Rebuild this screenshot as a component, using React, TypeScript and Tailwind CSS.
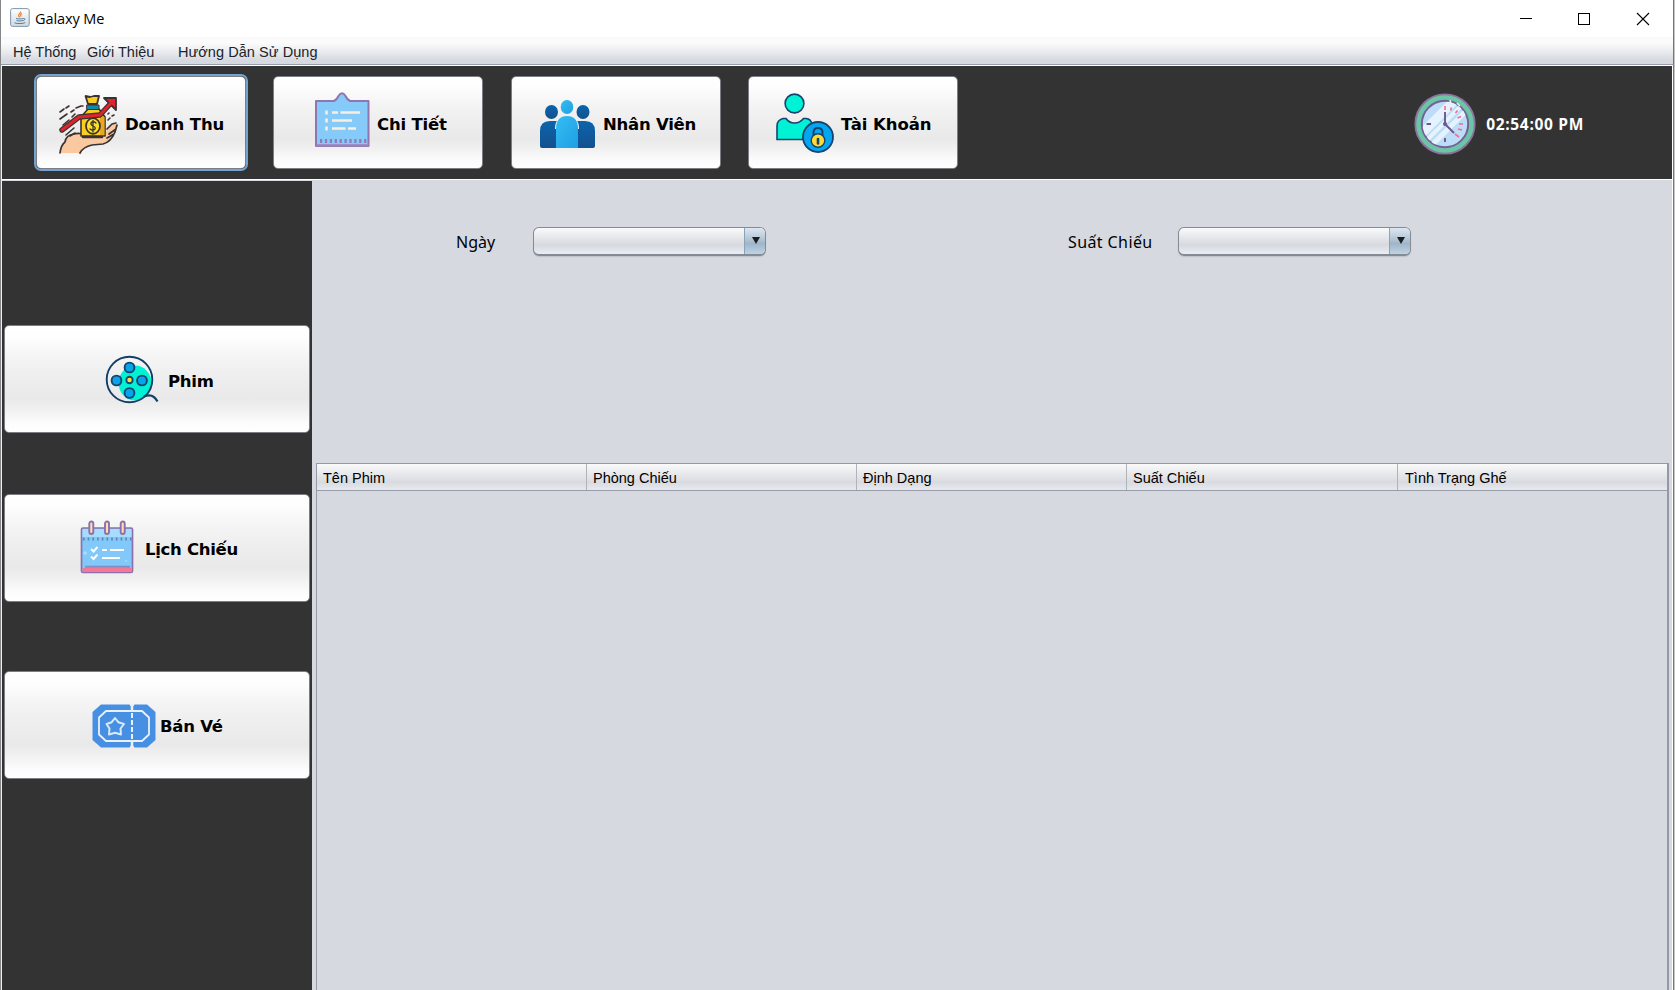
import type { ReactNode } from "react";

const DASH = "#3b3230";

function JavaIcon() {
  return (
    <svg width="20" height="20" viewBox="0 0 20 20" className="mb-px shrink-0">
      <defs>
        <linearGradient id="jbg" x1="0" y1="0" x2="0" y2="1">
          <stop offset="0" stopColor="#ffffff" />
          <stop offset="1" stopColor="#cfd8e1" />
        </linearGradient>
      </defs>
      <rect x="0.6" y="0.6" width="18.6" height="17.8" rx="2" fill="url(#jbg)" stroke="#7f97ad" />
      <path d="M10.500 3.500c1.200 1.800-3 2.600-1.800 4.400.5.600.8 1 .8 1.500M12 5.500c-1.600 1-1.800 1.800-.8 3" fill="none" stroke="#e8873a" strokeWidth="1.300" />
      <path d="M6 10.500c2 .6 5.500.6 7.500 0M6.500 12.500c2 .6 4.500.6 6.500 0M13.500 10.500c2.200-.4 1.800 1.600-.3 2M4.500 14.800c3 1.100 8 1 10.800-.2" fill="none" stroke="#5b7c99" strokeWidth="1" />
    </svg>
  );
}

function RevenueIcon() {
  return (
    <svg width="60" height="60" viewBox="0 0 60 60" className="mt-[4px] shrink-0" strokeLinecap="round" strokeLinejoin="round">
      <path d="M2 57Q3 50 7 47Q8 40 16 39Q23 37 28 41L45 41L52 31Q57 25 59 30L57 37Q53 47 45 49L34 50Q25 53 22 58L2 58Z" fill="#fbc9a0" />
      <path d="M2 58Q3 50 7 47Q8 40 16 39Q23 37 28 41M22 58Q25 52 34 50L45 49Q53 47 57 37L59 30M49 34L54 29L58 28M51 39L58 34M49 43L56 39" fill="none" stroke={DASH} strokeWidth="1.700" />
      <path d="M27.500 1L32 2L36 1L41 1L39 9H30Z" fill="#f5cf24" stroke={DASH} strokeWidth="1.800" />
      <path d="M30 14H41L47 22V41H23V22Z" fill="#f8cf20" stroke={DASH} strokeWidth="1.600" />
      <path d="M42 22H46.500V40H42Z" fill="#e7a91d" />
      <rect x="29" y="10" width="12" height="4.500" fill="#0b8aae" stroke={DASH} strokeWidth="1" />
      <ellipse cx="35" cy="31" rx="7" ry="7.800" fill="#ffe026" stroke={DASH} strokeWidth="1.800" />
      <path d="M38 28Q35 25.500 33 28Q32.500 30 35 31Q38 32 37 34Q35 36.500 32 34M35 25.500V37" fill="none" stroke={DASH} strokeWidth="1.300" />
      <path d="M25 42H44" stroke={DASH} strokeWidth="2.500" />
      <path d="M4 35L21 22L42 20L53 8" fill="none" stroke={DASH} strokeWidth="5.400" />
      <path d="M46 3H58V15Z" fill="#e3232f" stroke={DASH} strokeWidth="1.800" />
      <path d="M4 35L21 22L42 20L54 7" fill="none" stroke="#e0242f" strokeWidth="3" />
      <path d="M2 17L6 14M8 13L11 11M2 24L9 19M13 17L16 15M18 13L23 11H25M5 30L11 25M14 22L17 19M8 40L16 33M12 41L17 38M50 25L52 23M54 21L56 20M50 19L51 18" fill="none" stroke={DASH} strokeWidth="1.600" />
    </svg>
  );
}

function DetailIcon() {
  return (
    <svg width="56" height="56" viewBox="0 0 56 56" className="mb-[5px] shrink-0">
      <path d="M2 9H20Q23 7.500 24.500 4Q28 -1.500 31.500 4Q33 7.500 36 9H54.500V54H2Z" fill="#86cafa" stroke="#9175ae" strokeWidth="2" strokeLinejoin="round" />
      <path d="M2 53.500H54.500" stroke="#9c80b6" strokeWidth="2.600" />
      <g stroke="#f8efe0" strokeWidth="2.300">
        <path d="M18 20.500H24M26.500 20.500H46M18 28.500H38M18 36.500H31.500M34 36.500H42" />
        <path d="M12.500 18.500V22.500M12.500 26.500V30.500M12.500 34.500V38.500" strokeWidth="2.500" />
      </g>
      <path d="M6 49H53" stroke="#8f7bb5" strokeWidth="4" strokeDasharray="2.200 2.700" />
    </svg>
  );
}

function StaffIcon() {
  return (
    <svg width="56" height="50" viewBox="0 0 56 50" className="mt-[2px] shrink-0">
      <defs>
        <linearGradient id="dk" x1="0" y1="0" x2="0" y2="1">
          <stop offset="0" stopColor="#0b64ad" />
          <stop offset="1" stopColor="#14508d" />
        </linearGradient>
        <linearGradient id="lt" x1="0" y1="0" x2="1" y2="1">
          <stop offset="0" stopColor="#34bdf3" />
          <stop offset="1" stopColor="#1f9fe4" />
        </linearGradient>
      </defs>
      <ellipse cx="11.500" cy="13" rx="6.500" ry="7" fill="url(#dk)" />
      <ellipse cx="43" cy="13" rx="6.500" ry="7" fill="url(#dk)" />
      <path d="M0 47V32Q0 22 10 22H20V49H2Q0 49 0 47Z" fill="url(#dk)" />
      <path d="M55 47V32Q55 22 45 22H36V49H53Q55 49 55 47Z" fill="url(#dk)" />
      <path d="M15 49V29Q15.500 17 27 17Q38.500 17 39 29V49Z" fill="#eef4f8" />
      <path d="M16 49V29Q16.500 17 27 17Q37.500 17 38 29V49Z" fill="url(#lt)" />
      <path d="M15 49V30H16V49ZM38 49V30H39V49Z" fill="#0e58a0" />
      <ellipse cx="27" cy="8" rx="6.300" ry="7" fill="url(#lt)" />
    </svg>
  );
}

function AccountIcon() {
  return (
    <svg width="60" height="62" viewBox="0 0 60 62" className="mt-px shrink-0">
      <circle cx="19.500" cy="11.500" r="9.400" fill="#00f2d4" stroke="#17436e" strokeWidth="1.600" />
      <path d="M2 47.500V34Q2 28 8 26.500H11Q14 31 19.500 31Q25 31 28.500 26.500H31Q36 27 37 32L40 47.500Z" fill="#00f2d4" stroke="#17436e" strokeWidth="1.600" />
      <circle cx="43" cy="45" r="15" fill="#04a6f0" stroke="#17436e" strokeWidth="1.800" />
      <path d="M38.500 44V40.500Q38.500 36 43 36Q47.500 36 47.500 40.500V44" fill="none" stroke="#17436e" strokeWidth="2" />
      <circle cx="43" cy="48.500" r="6.800" fill="#ffdb35" stroke="#17436e" strokeWidth="1.400" />
      <path d="M43 47V51.500" stroke="#17436e" strokeWidth="2.600" strokeLinecap="round" />
    </svg>
  );
}

function ReelIcon() {
  return (
    <svg width="54" height="50" viewBox="0 0 54 50" className="mt-px shrink-0">
      <ellipse cx="30" cy="28" rx="16.500" ry="17.500" fill="#00f2d4" />
      <circle cx="24.500" cy="24.500" r="22.800" fill="none" stroke="#123f68" strokeWidth="1.900" />
      <g fill="#06a4ea" stroke="#17436e" strokeWidth="1.900">
        <circle cx="24.500" cy="12.500" r="4.900" />
        <circle cx="11.500" cy="25.500" r="4.900" />
        <circle cx="37" cy="25.500" r="4.900" />
        <circle cx="24.500" cy="38" r="4.900" />
      </g>
      <circle cx="24.500" cy="25" r="3.200" fill="#ffdb35" stroke="#17436e" strokeWidth="1.900" />
      <path d="M39 41.500Q48 37.500 52.500 46.500" fill="none" stroke="#123f68" strokeWidth="2.200" />
    </svg>
  );
}

function CalendarIcon() {
  return (
    <svg width="54" height="54" viewBox="0 0 54 54" className="mb-[2px] shrink-0">
      <rect x="1.500" y="8" width="51" height="44.500" rx="1.500" fill="#82c8f8" stroke="#8d70ab" strokeWidth="1.700" />
      <rect x="2.500" y="9" width="49" height="8" fill="#a6ddfc" />
      <path d="M3 19H52" stroke="#5f86bb" strokeWidth="2.800" strokeDasharray="1.600 3.100" />
      <rect x="2.500" y="48" width="49" height="4" fill="#f47796" />
      <path d="M5 46.800H50" stroke="#7c8fc7" strokeWidth="1.900" />
      <g fill="#f8e0b2" stroke="#8d70ab" strokeWidth="1.900">
        <rect x="9.300" y="1.500" width="4" height="12.500" rx="2" />
        <rect x="25" y="1.500" width="4" height="12.500" rx="2" />
        <rect x="40.700" y="1.500" width="4" height="12.500" rx="2" />
      </g>
      <path d="M11 29L13.500 31.500L17.500 27M11 36.500L13.500 39L17.500 34.500M22 30H27M30 30H44M22 38H40" fill="none" stroke="#fff" strokeWidth="2" />
      <path d="M5 31V35M3 33H7M46 40V42" stroke="#b8e5fc" />
    </svg>
  );
}

function TicketIcon() {
  return (
    <svg width="64" height="44" viewBox="0 0 64 44" className="mt-px shrink-0">
      <path d="M9 .5H37.500L40 4L42.500 .5H55L63.500 8V36L55 43.500H42.500L40 40L37.500 43.500H9L.5 36V8Z" fill="#468fe2" />
      <path d="M14 7H50L57 13.500V30.500L50 37H14L7 30.500V13.500Z" fill="none" stroke="#e9f2fb" strokeWidth="1.800" strokeLinejoin="round" />
      <path d="M40 0V7M40 37V44" stroke="#eee" strokeWidth="2.500" />
      <path d="M40 9V36" stroke="#e9f2fb" strokeWidth="2" strokeDasharray="5 2" />
      <path d="M23 14L26.300 18.200L32 20L28.500 24.500L29 30.500L23 28.800L17 30.500L17.500 24.500L14.500 20L19.700 18.200Z" fill="none" stroke="#d9e9fa" strokeWidth="2" strokeLinejoin="round" />
    </svg>
  );
}

function ClockIcon() {
  return (
    <svg width="62" height="62" viewBox="0 0 62 62" className="shrink-0">
      <defs>
        <clipPath id="face"><circle cx="31" cy="31" r="22.500" /></clipPath>
      </defs>
      <circle cx="31" cy="31" r="29.700" fill="#6cc5a5" stroke="#8d73a0" strokeWidth="1.800" />
      <circle cx="31" cy="31" r="23.200" fill="#bddcf8" stroke="#76609a" strokeWidth="2" />
      <g clipPath="url(#face)" stroke="#e5f3fe">
        <path d="M5 43L43 5" strokeWidth="9" />
        <path d="M15 55L58 12" strokeWidth="5" />
        <path d="M10 50L52 8" strokeWidth="4" />
      </g>
      <path d="M31 19V31L40 40M12.500 31H17M31 45V49" fill="none" stroke="#6e568f" strokeWidth="1.900" />
      <path d="M31 13V17M37.500 14.500L36.500 17.500M43.500 17.500L41.500 20M47 23.500L43.500 25M45 31H49M44 36L48 37M41 41L45 44" stroke="#ed6f91" strokeWidth="1.600" />
      <path d="M36 7L37 11M43 10L46 13" stroke="#e3f2fc" strokeWidth="1.600" />
      <circle cx="31" cy="31" r="2" fill="#6e568f" />
    </svg>
  );
}

function NimbusButton({ children, className, focused }: { children: ReactNode; className: string; focused?: boolean }) {
  return (
    <button
      className={
        "flex shrink-0 items-center rounded-[5px] border border-[#7c7e83] bg-[linear-gradient(180deg,#ffffff_0%,#fdfdfd_12%,#f4f4f4_30%,#eeeeee_48%,#e9e9e9_68%,#f0f0f0_78%,#fcfcfc_92%,#ffffff_100%)] font-['DejaVu_Sans','Liberation_Sans',sans-serif] text-[16.5px] leading-none font-bold tracking-[-0.1px] whitespace-nowrap text-black " +
        (focused ? "shadow-[0_0_0_2px_#73a4d1] " : "") +
        className
      }
    >
      {children}
    </button>
  );
}

function Combo() {
  return (
    <div className="mt-px flex h-[29px] w-[233px] shrink-0 overflow-hidden rounded-[6px] border border-b-2 border-[#858b95] bg-[linear-gradient(180deg,#fafafb_0%,#e6e8eb_35%,#d6d9de_65%,#eaedf4_100%)] shadow-[0_1px_1px_#bfc3ca]">
      <div className="flex-1" />
      <div className="flex w-[21px] items-center justify-center border-l border-[#8ba3b8] bg-[linear-gradient(180deg,#dce7f0_0%,#b6c8d8_40%,#a0b5c8_60%,#bdd3e6_100%)] pb-px pl-px">
        <svg width="8" height="7" viewBox="0 0 8 7"><path d="M0 0H8L4 7Z" fill="#1b1d20" /></svg>
      </div>
    </div>
  );
}

const columns = [
  { label: "Tên Phim", cls: "w-[270px] pl-[6px]" },
  { label: "Phòng Chiếu", cls: "w-[270px] pl-[6px]" },
  { label: "Định Dạng", cls: "w-[270px] pl-[6px]" },
  { label: "Suất Chiếu", cls: "w-[271px] pl-[6px]" },
  { label: "Tình Trạng Ghế", cls: "flex-1 pl-[7px]" },
];

export default function App() {
  return (
    <div className="flex h-[990px] w-[1675px] flex-col overflow-hidden border-r border-l border-r-[#c4c4c4] border-l-[#85878b] bg-white font-['Liberation_Sans',Arial,sans-serif] text-black">
      <header className="flex h-[37px] shrink-0 items-center border-r border-[#777]">
        <div className="flex flex-1 items-center gap-[5px] pl-[9px]">
          <JavaIcon />
          <span className="font-['Open_Sans','Noto_Sans',sans-serif] text-[14.5px] leading-5 tracking-[-0.1px]">Galaxy Me</span>
        </div>
        <svg width="153" height="36" viewBox="0 0 153 36" fill="none" stroke="#000" shapeRendering="crispEdges">
          <path d="M0 17.500H12" />
          <rect x="58.500" y="12.500" width="11" height="11" />
          <path d="M117 12L129 24M129 12L117 24" shapeRendering="auto" strokeWidth="1.100" />
        </svg>
      </header>
      <nav className="flex h-7 shrink-0 items-center border-r border-b border-r-[#777] border-b-[#989ca9] bg-[linear-gradient(180deg,#f8f9f9_0%,#fcfcfc_20%,#e9ebef_55%,#d6d9e0_85%,#d6d9e0_100%)] pt-[3px] pl-[12px] text-[14.5px] leading-none whitespace-nowrap text-[#202328]">
        <span className="w-[74px]">Hệ Thống</span>
        <span className="w-[91px]">Giới Thiệu</span>
        <span className="tracking-[0.06px]">Hướng Dẫn Sử Dụng</span>
      </nav>
      <div className="flex flex-1 flex-col border-r border-l border-r-[#777] border-l-[#eee] pt-px pr-px">
        <section className="flex h-[113px] shrink-0 items-start bg-[#333333] pt-[10px] pl-[34px]">
          <NimbusButton focused className="mr-[27px] h-[93px] w-[210px] gap-[7px] pl-[21px]">
            <RevenueIcon />
            <span className="pt-[6px]">Doanh Thu</span>
          </NimbusButton>
          <NimbusButton className="mr-[28px] h-[93px] w-[210px] gap-[7px] pl-[40px]">
            <DetailIcon />
            <span className="pt-[6px] tracking-[-0.2px]">Chi Tiết</span>
          </NimbusButton>
          <NimbusButton className="mr-[27px] h-[93px] w-[210px] gap-[7px] pl-[28px]">
            <StaffIcon />
            <span className="pt-[6px] tracking-[-0.25px]">Nhân Viên</span>
          </NimbusButton>
          <NimbusButton className="h-[93px] w-[210px] gap-[6px] pl-[26px]">
            <AccountIcon />
            <span className="pt-[6px]">Tài Khoản</span>
          </NimbusButton>
          <div className="ml-auto flex h-[95px] items-center gap-[10px] pr-[88px]">
            <ClockIcon />
            <span className="pt-px font-['Open_Sans','Noto_Sans',sans-serif] text-[15.5px] leading-5 font-bold tracking-[0.68px] text-white">02:54:00 PM</span>
          </div>
        </section>
        <div className="h-[2px] shrink-0 border-t border-white bg-[#d6d9e0]" />
        <div className="flex flex-1">
          <aside className="flex w-[310px] shrink-0 flex-col bg-[#333333] pt-[144px] pl-[2px]">
            <NimbusButton className="mb-[61px] h-[108px] w-[306px] gap-[9px] pl-[100px]">
              <ReelIcon />
              <span className="pt-[6px] tracking-[-0.25px]">Phim</span>
            </NimbusButton>
            <NimbusButton className="mb-[69px] h-[108px] w-[306px] gap-[11px] pl-[75px]">
              <CalendarIcon />
              <span className="pt-[5px] tracking-[-0.3px]">Lịch Chiếu</span>
            </NimbusButton>
            <NimbusButton className="h-[108px] w-[306px] gap-[4px] pl-[87px]">
              <TicketIcon />
              <span className="pt-[5px] tracking-[-0.25px]">Bán Vé</span>
            </NimbusButton>
          </aside>
          <main className="flex flex-1 flex-col bg-[#d6d9e0] pr-[3px] pl-[4px]">
            <div className="flex h-[282px] shrink-0 items-start pt-[45px] pl-[140px] font-['Noto_Sans','Open_Sans',sans-serif] text-base">
              <label className="flex h-[31px] w-[77px] items-center">Ngày</label>
              <Combo />
              <label className="ml-[302px] flex h-[31px] w-[110px] items-center tracking-[0.4px]">Suất Chiếu</label>
              <Combo />
            </div>
            <div className="flex flex-1 flex-col border-t border-r-2 border-l border-[#9599a5]">
              <div className="flex h-[27px] border-b border-[#989ca8] bg-[linear-gradient(180deg,#fafafa_0%,#e9eaed_35%,#d9dbe0_70%,#e6e9f0_100%)] text-[14.5px] leading-none">
                {columns.map((c, i) => (
                  <div key={c.label} className={"flex items-center pt-[2px] whitespace-nowrap " + (i < 4 ? "border-r border-[#b0b3ba] " : "") + c.cls}>
                    {c.label}
                  </div>
                ))}
              </div>
            </div>
          </main>
        </div>
      </div>
    </div>
  );
}
